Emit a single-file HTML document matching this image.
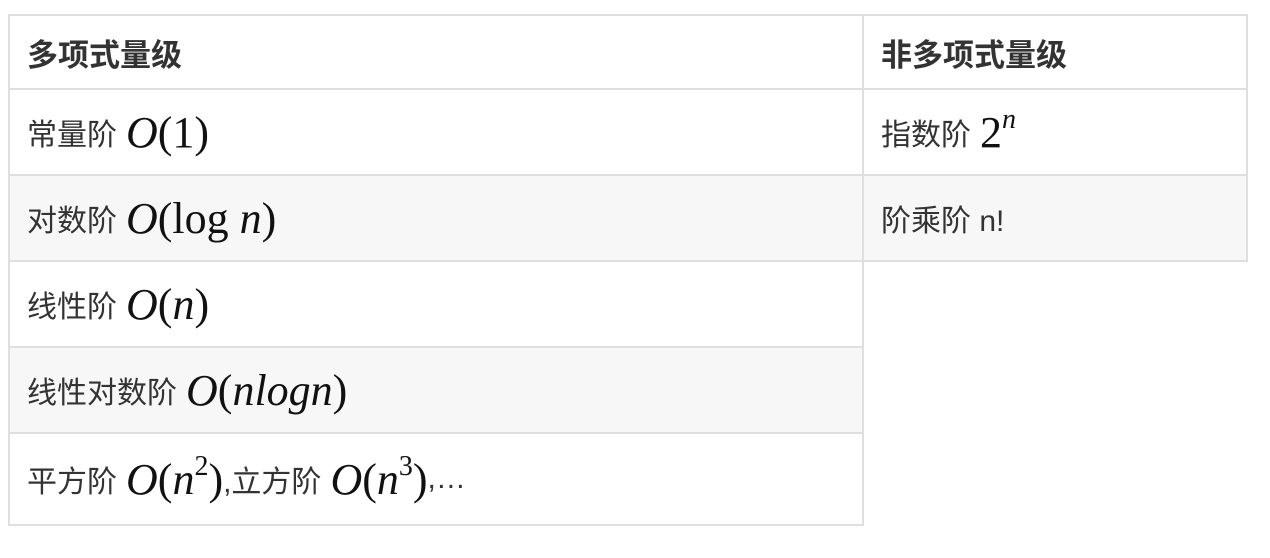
<!DOCTYPE html>
<html><head><meta charset="utf-8"><style>
body{margin:0;width:1270px;height:558px;background:#fff;position:relative;overflow:hidden;font-family:"Liberation Sans","Noto Sans CJK SC",sans-serif;color:#333}
.c{position:absolute;box-sizing:border-box;border:2px solid #dfdfdf;display:flex;align-items:center;padding-left:17px;font-size:30px}
.g{background:#f7f7f7}
.h{font-weight:bold;font-size:31px;color:#333}
.m{font-family:"Liberation Serif","DejaVu Serif",serif;font-size:44px;color:#111;margin-left:9px}
.m i{font-style:italic}
sup{font-size:28px;vertical-align:19px;line-height:0}
.s{font-size:30px}
</style></head><body>
<div class="c h" style="left:8px;top:14px;width:856px;height:76px;">多项式量级</div>
<div class="c h" style="left:862px;top:14px;width:386px;height:76px;">非多项式量级</div>
<div class="c" style="left:8px;top:88px;width:856px;height:88px;">常量阶<span class="m"><i>O</i>(1)</span></div>
<div class="c" style="left:862px;top:88px;width:386px;height:88px;">指数阶<span class="m">2<sup><i>n</i></sup></span></div>
<div class="c g" style="left:8px;top:174px;width:856px;height:88px;">对数阶<span class="m"><i>O</i>(log <i>n</i>)</span></div>
<div class="c g" style="left:862px;top:174px;width:386px;height:88px;">阶乘阶 n!</div>
<div class="c" style="left:8px;top:260px;width:856px;height:88px;">线性阶<span class="m"><i>O</i>(<i>n</i>)</span></div>
<div class="c g" style="left:8px;top:346px;width:856px;height:88px;">线性对数阶<span class="m"><i>O</i>(<i>nlogn</i>)</span></div>
<div class="c" style="left:8px;top:432px;width:856px;height:94px;">平方阶<span class="m"><i>O</i>(<i>n</i><sup>2</sup>)</span><span class="s">,立方阶</span><span class="m"><i>O</i>(<i>n</i><sup>3</sup>)</span><span class="s">,…</span></div>
</body></html>
